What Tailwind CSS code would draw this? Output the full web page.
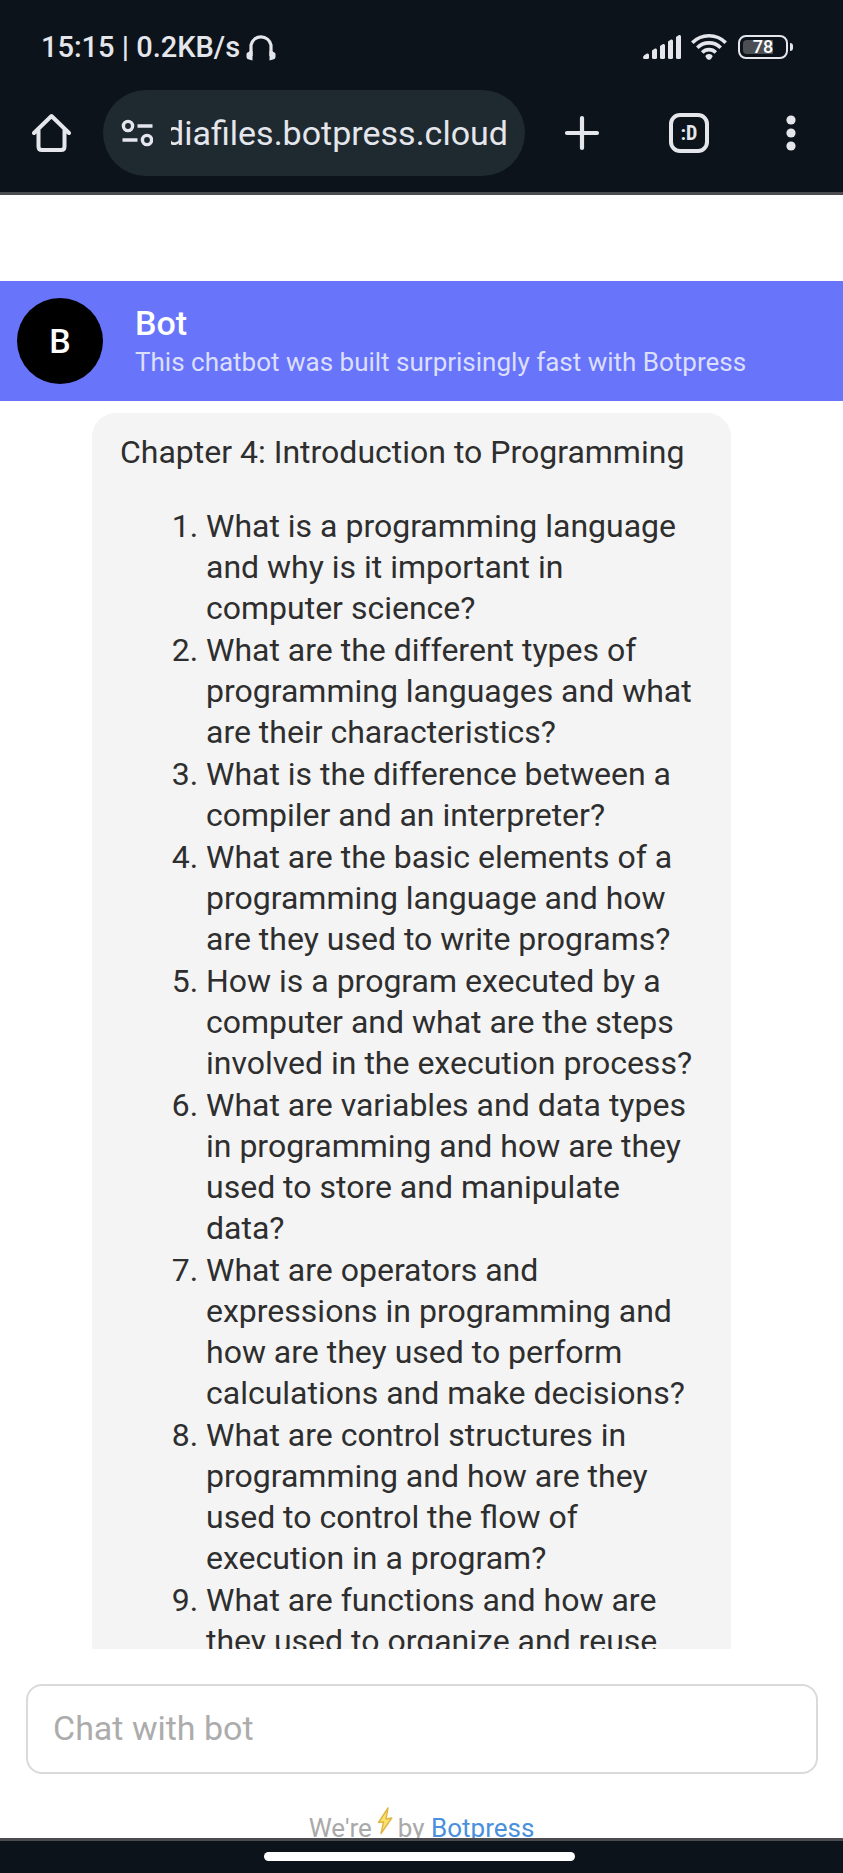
<!DOCTYPE html>
<html lang="en">
<head>
<meta charset="utf-8">
<meta name="viewport" content="width=device-width, initial-scale=1">
<title>Bot</title>
<script src="https://cdn.jsdelivr.net/npm/@tailwindcss/browser@4"></script>
</head>
<body class="flex h-screen flex-col overflow-hidden bg-white font-[Roboto,sans-serif] text-[#2e2e2e]">

<header class="shrink-0 border-b-3 border-[#4a4c50] bg-[#0c131a] text-[#e4e6ec]">
  <!-- Status bar -->
  <div class="flex h-[90px] items-center justify-between pt-1 pr-[50px] pl-[41px]">
    <div class="flex items-center gap-1.5">
      <span class="text-[29px] leading-8 font-medium whitespace-nowrap">15:15 | 0.2KB/s</span>
      <svg class="h-7 w-[30px]" viewBox="0 0 30 28" fill="none" aria-hidden="true">
        <path d="M5 23V12A10.200 10.200 0 0 1 25 12V23" stroke="currentColor" stroke-width="3.200"/>
        <path d="M6.500 18H3.500Q3 19 1.500 19.500Q0.500 20 0.500 21V24Q0.500 26 3 26.500L6.500 27.500ZM23.500 18H26.500Q27 19 28.500 19.500Q29.500 20 29.500 21V24Q29.500 26 27 26.500L23.500 27.500Z" fill="currentColor"/>
      </svg>
    </div>
    <div class="flex items-center">
      <svg class="h-7 w-[38px]" viewBox="0 0 38 28" fill="currentColor" aria-hidden="true">
        <path d="M0 24.500Q0 23 1.500 22L4 20.500Q6 20 6 22V24.500Q6 26 4.500 26H1.500Q0 26 0 24.500Z"/>
        <path d="M9 17.500L12 15.500Q14 15 14 17V24.500Q14 26 12.500 26H10.500Q9 26 9 24.500Z"/>
        <path d="M17 13L20 11Q22 10.500 22 12.500V24.500Q22 26 20.500 26H18.500Q17 26 17 24.500Z"/>
        <path d="M25 8.500L28 6.500Q30 6 30 8V24.500Q30 26 28.500 26H26.500Q25 26 25 24.500Z"/>
        <path d="M33 4L36 2Q38 1.500 38 3.500V24.500Q38 26 36.500 26H34.500Q33 26 33 24.500Z"/>
      </svg>
      <svg class="ml-2.5 h-7 w-9" viewBox="0 0 36 28" fill="none" stroke="currentColor" stroke-width="3.600" aria-hidden="true">
        <path d="M1.300 9.700A23.500 23.500 0 0 1 34.700 9.700M6.300 14.700A16.600 16.600 0 0 1 29.700 14.700M11.200 19.400A9.600 9.600 0 0 1 24.800 19.400"/>
        <path d="M18 21Q21.500 21 21.500 23.500Q20.500 26.500 18 27Q15.500 26.500 14.500 23.500Q14.500 21 18 21Z" fill="currentColor" stroke="none"/>
      </svg>
      <div class="ml-[11px] flex items-center gap-0.5" aria-label="Battery 78%">
        <div class="flex h-6 w-[50px] items-center rounded-lg border-2 border-current p-[3px]">
          <div class="flex h-full w-full items-center justify-center rounded-sm bg-linear-to-r from-[#4b4f53] from-75% to-transparent to-75% text-lg leading-4 font-medium text-white">78</div>
        </div>
        <div class="h-2 w-[3px] rounded-r-sm bg-current"></div>
      </div>
    </div>
  </div>

  <!-- Browser toolbar -->
  <div class="flex h-[102px] items-start pr-[34px] pl-8">
    <button class="flex h-[86px] w-10 items-center" aria-label="Home">
      <svg class="h-10 w-10" viewBox="0 0 40 40" fill="none" stroke="currentColor" stroke-width="4" stroke-linejoin="round" stroke-linecap="round" aria-hidden="true">
        <path d="M2 20L19.500 3L37 20M6.500 16V33.500Q6.500 37 10 37H29Q32.500 37 32.500 33.500V16"/>
      </svg>
    </button>
    <div class="ml-[31px] flex h-[86px] min-w-0 flex-1 items-center gap-[18px] rounded-full bg-[#1e2930] pr-[17px] pl-[18px]">
      <button class="shrink-0" aria-label="Site settings">
        <svg class="h-7 w-8" viewBox="0 0 32 28" fill="none" stroke="currentColor" stroke-width="3.400" aria-hidden="true">
          <circle cx="7" cy="7" r="4.600"/><path d="M16.500 7H31.500M1.500 21H16.500"/><circle cx="26" cy="21" r="4.600"/>
        </svg>
      </button>
      <div class="flex min-w-0 flex-1 justify-end overflow-hidden text-[34px] leading-[42px]"><span>mediafiles.botpress.cloud</span></div>
    </div>
    <button class="ml-[39px] flex h-[86px] w-9 items-center" aria-label="New tab">
      <svg class="h-9 w-9" viewBox="0 0 36 36" stroke="currentColor" stroke-width="4.200" stroke-linecap="round" aria-hidden="true"><path d="M18 3V33M3 18H33"/></svg>
    </button>
    <button class="ml-[69px] flex h-[86px] w-10 items-center" aria-label="Switch tabs">
      <span class="flex h-10 w-10 items-center justify-center rounded-[11px] border-4 border-current font-[Roboto_Condensed,Roboto,sans-serif] text-xl leading-5 font-bold">:D</span>
    </button>
    <button class="ml-16 flex h-[86px] w-9 items-center justify-center" aria-label="More options">
      <svg class="h-9 w-3" viewBox="0 0 12 36" fill="currentColor" aria-hidden="true"><circle cx="6" cy="5" r="4.600"/><circle cx="6" cy="18" r="4.600"/><circle cx="6" cy="31" r="4.600"/></svg>
    </button>
  </div>
</header>

<section class="mt-[86px] flex shrink-0 items-center gap-8 bg-[#6875fb] px-[17px] py-[17px]">
  <div class="flex h-[86px] w-[86px] shrink-0 items-center justify-center rounded-full bg-black text-[34px] font-medium text-white">B</div>
  <div>
    <h1 class="text-[34px] leading-[38px] font-medium text-white">Bot</h1>
    <p class="mt-1 text-[26px] leading-8 text-[#dcdffb]">This chatbot was built surprisingly fast with Botpress</p>
  </div>
</section>

<main class="min-h-0 flex-1 overflow-hidden pt-3 pr-28 pl-[92px]">
  <article class="rounded-3xl bg-[#f4f4f4] px-7 pt-[19px] pb-5 text-[32px] leading-[41px]">
    <p>Chapter 4: Introduction to Programming</p>
    <ol class="mt-[33px] list-decimal space-y-px pl-[86px]">
      <li>What is a programming language<br>and why is it important in<br>computer science?</li>
      <li>What are the different types of<br>programming languages and what<br>are their characteristics?</li>
      <li>What is the difference between a<br>compiler and an interpreter?</li>
      <li>What are the basic elements of a<br>programming language and how<br>are they used to write programs?</li>
      <li>How is a program executed by a<br>computer and what are the steps<br>involved in the execution process?</li>
      <li>What are variables and data types<br>in programming and how are they<br>used to store and manipulate<br>data?</li>
      <li>What are operators and<br>expressions in programming and<br>how are they used to perform<br>calculations and make decisions?</li>
      <li>What are control structures in<br>programming and how are they<br>used to control the flow of<br>execution in a program?</li>
      <li>What are functions and how are<br>they used to organize and reuse</li>
    </ol>
  </article>
</main>

<form class="shrink-0 pt-[35px] pr-[25px] pl-[26px]">
  <input type="text" aria-label="Chat with bot" placeholder="Chat with bot" class="block h-[90px] w-full rounded-2xl border-2 border-[#dadada] px-[25px] pb-0.5 text-[34px] placeholder:text-[#acacac]">
</form>

<div class="flex h-16 shrink-0 justify-center overflow-hidden pt-[38px] text-[26px] leading-8 text-[#a9a9a9]">
  <p class="flex gap-[5px] whitespace-nowrap"><span>We're</span>
    <svg class="-mt-2 h-8 w-4" viewBox="0 0 16 32" fill="#fbe36a" stroke="#dfb545" stroke-width="1.400" stroke-linejoin="round" role="img" aria-label="lightning"><path d="M11 4L1.500 18.500L6.500 18L4 29.500L14.800 14L9 15Z"/></svg>
    <span>by <a href="#" class="text-[#4a90dd]">Botpress</a></span></p>
</div>

<footer class="flex h-[35px] shrink-0 items-start justify-center border-t-3 border-[#4a4c50] bg-[#0c131a] pt-[11px] pr-1">
  <div class="h-[9px] w-[37%] rounded-full bg-white"></div>
</footer>

</body>
</html>
